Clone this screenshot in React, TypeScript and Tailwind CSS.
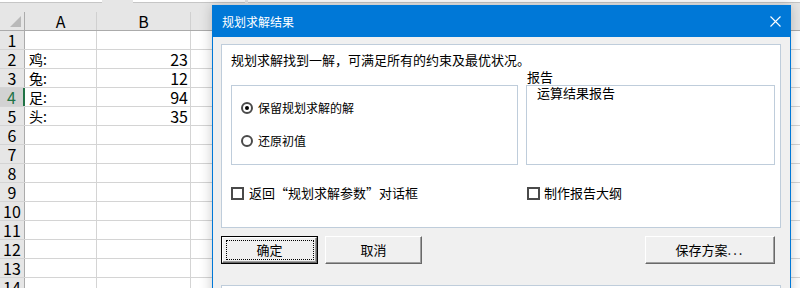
const rows: { label?: string; value?: string }[] = [
  {},
  { label: "鸡:", value: "23" },
  { label: "兔:", value: "12" },
  { label: "足:", value: "94" },
  { label: "头:", value: "35" },
  {}, {}, {}, {}, {}, {}, {}, {}, {},
];

function Radio({ checked }: { checked?: boolean }) {
  return (
    <span className="flex h-[12px] w-[12px] shrink-0 items-center justify-center rounded-full border-2 border-[#4a4a4a] bg-white">
      {checked && <span className="h-[4px] w-[4px] rounded-full bg-black" />}
    </span>
  );
}

function Check() {
  return <span className="h-[13px] w-[13px] shrink-0 border-2 border-[#4a4a4a] bg-white" />;
}

function Btn({ children, w, primary }: { children: React.ReactNode; w: string; primary?: boolean }) {
  return (
    <div className={`${w} h-[28px] ${primary ? "border border-black" : ""}`}>
      <div className="flex h-full w-full items-center justify-center border-t border-l border-white border-b border-r border-b-[#696969] border-r-[#696969] bg-[#f0f0f0] shadow-[inset_-1px_-1px_0_#a0a0a0]">
        {primary ? (
          <div className="flex h-[20px] w-[88px] items-center justify-center border border-dotted border-black">
            {children}
          </div>
        ) : (
          children
        )}
      </div>
    </div>
  );
}

export default function App() {
  return (
    <div className="relative h-[288px] w-[800px] overflow-hidden bg-white">
      {/* SHEET */}
      <div className="font-['Liberation_Sans_Narrow','Noto_Sans_CJK_SC',sans-serif] text-[16px] text-black">
        <div className="flex h-[12px] bg-[#e6e6e6]">
          <div className="h-[3px] w-[102px] border-b border-[#c6c6c6] bg-white" />
          <div className="ml-[31px] h-[3px] w-[112px] border-b border-[#c6c6c6] bg-white" />
          <div className="ml-[3px] h-[3px] flex-1 border-b border-[#c6c6c6] bg-white" />
        </div>
        <div className="flex h-[19px] border-b border-[#ababab] bg-[#e6e6e6] leading-[18px]">
          <div className="relative w-[25px] border-r border-[#ababab]">
            <svg className="absolute right-[3px] bottom-[3px]" width="11" height="11" viewBox="0 0 11 11">
              <polygon points="11,0 11,11 0,11" fill="#b9b9b9" />
            </svg>
          </div>
          <div className="w-[72px] border-r border-[#d0d0d0] text-center">A</div>
          <div className="w-[94px] border-r border-[#d0d0d0] text-center">B</div>
          <div className="flex-1" />
        </div>
        {rows.map((r, i) => (
          <div key={i} className="flex h-[19px] border-b border-[#d4d4d4] leading-[18px]">
            <div
              className={`w-[25px] text-center ${
                i === 3
                  ? "border-r-2 border-[#217346] bg-[#d2d2d2] text-[#217346]"
                  : "border-r border-[#ababab] bg-[#e6e6e6]"
              }`}
            >
              {i + 1}
            </div>
            <div className="w-[72px] border-r border-[#d4d4d4] pl-[4px] text-[14px]">{r.label}</div>
            <div className="w-[94px] border-r border-[#d4d4d4] pr-[2px] text-right">{r.value}</div>
            <div className="flex-1" />
          </div>
        ))}
      </div>

      {/* DIALOG */}
      <div className="absolute top-[5px] left-[212px] h-[300px] w-[579px] border border-b-0 border-[#0078d7] bg-[#f0f0f0] font-['Noto_Sans_CJK_SC',sans-serif] text-[13px] text-black shadow-[0_0_12px_rgba(0,0,0,0.22)]">
        <div className="flex h-[31px] items-center justify-between bg-[#0078d7] pr-[9px] pl-[9px] text-[12px] text-white">
          <span>规划求解结果</span>
          <svg width="11" height="11" viewBox="0 0 11 11" stroke="white" strokeWidth="1.1">
            <path d="M0.5 0.5 L10.5 10.5 M10.5 0.5 L0.5 10.5" />
          </svg>
        </div>

        <div className="pt-[7px] pl-[8px]">
          <div className="h-[184px] w-[560px] border border-[#bfcddb] bg-white pr-[5px] pl-[9px]">
            <div className="pt-[7px] leading-[16px]">规划求解找到一解，可满足所有的约束及最优状况。</div>
            <div className="flex">
              <div className="w-[287px] shrink-0 pt-[17px]">
                <div className="flex h-[80px] flex-col gap-[19px] border border-[#bfcddb] pt-[15px] pl-[9px] text-[12px] leading-[14px]">
                  <div className="flex items-center gap-[5px]">
                    <Radio checked />
                    <span>保留规划求解的解</span>
                  </div>
                  <div className="flex items-center gap-[5px]">
                    <Radio />
                    <span>还原初值</span>
                  </div>
                </div>
                <div className="mt-[20px] flex h-[16px] items-center gap-[5px]">
                  <Check />
                  <span>返回“规划求解参数”对话框</span>
                </div>
              </div>
              <div className="ml-[8px] w-[249px] shrink-0">
                <div className="h-[17px] pl-[1px] leading-[17px]">报告</div>
                <div className="h-[80px] border border-[#bfcddb] pl-[10px] leading-[14px]">运算结果报告</div>
                <div className="mt-[20px] flex h-[16px] items-center gap-[4px] pl-[1px]">
                  <Check />
                  <span>制作报告大纲</span>
                </div>
              </div>
            </div>
          </div>

          <div className="mt-[8px] flex w-[560px]">
            <Btn w="w-[97px]" primary>确定</Btn>
            <div className="ml-[7px]">
              <Btn w="w-[97px]">取消</Btn>
            </div>
            <div className="mr-[6px] ml-auto">
              <Btn w="w-[130px]">
                <span>
                  保存方案<span className="tracking-[2px]">...</span>
                </span>
              </Btn>
            </div>
          </div>

          <div className="mt-[21px] h-[40px] w-[560px] border border-[#bfcddb] bg-white" />
        </div>
      </div>
    </div>
  );
}
